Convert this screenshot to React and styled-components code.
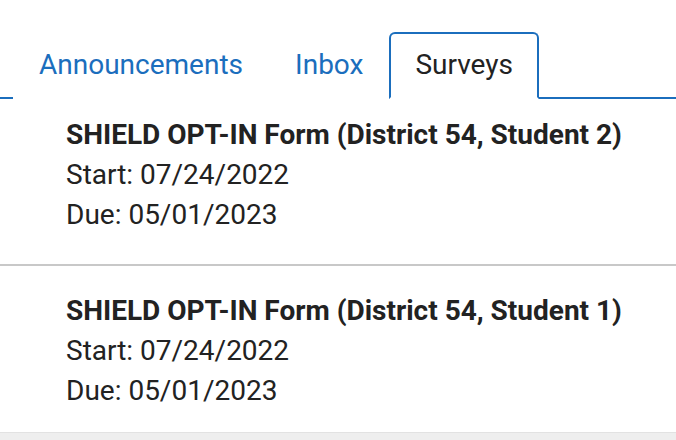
import React, { useState } from "react";
import styled, { createGlobalStyle } from "styled-components";

const GlobalStyle = createGlobalStyle`
  html, body {
    margin: 0;
    padding: 0;
    background: #ffffff;
  }
  body {
    font-family: Roboto, "Liberation Sans", Arial, sans-serif;
    color: #222222;
  }
`;

const surveys = [
  {
    id: 2,
    title: "SHIELD OPT-IN Form (District 54, Student 2)",
    start: "07/24/2022",
    due: "05/01/2023",
  },
  {
    id: 1,
    title: "SHIELD OPT-IN Form (District 54, Student 1)",
    start: "07/24/2022",
    due: "05/01/2023",
  },
];

const tabs = ["Announcements", "Inbox", "Surveys"];

export default function App() {
  const [active, setActive] = useState("Surveys");

  return (
    <>
      <GlobalStyle />
      <Page>
        <TabList>
          {tabs.map((tab) => (
            <Tab
              key={tab}
              $active={tab === active}
              onClick={() => setActive(tab)}
            >
              {tab}
            </Tab>
          ))}
        </TabList>
        <SurveyList>
          {surveys.map((survey, index) => (
            <React.Fragment key={survey.id}>
              {index > 0 && <Divider />}
              <SurveyItem>
                <Title>{survey.title}</Title>
                <Line>Start: {survey.start}</Line>
                <Line>Due: {survey.due}</Line>
              </SurveyItem>
            </React.Fragment>
          ))}
        </SurveyList>
        <Footer />
      </Page>
    </>
  );
}

const Page = styled.div`
  display: flex;
  flex-direction: column;
  min-height: 440px;
  padding-top: 32px;
  box-sizing: border-box;
`;

const TabList = styled.div`
  display: flex;
  align-items: flex-end;
  padding-left: 13px;
  border-bottom: 2px solid #1b6ebd;
`;

const Tab = styled.button`
  font-family: inherit;
  font-size: 28px;
  line-height: 32px;
  padding: 15px 24px 16px;
  margin-bottom: -2px;
  background: #ffffff;
  border: 2px solid ${(p) => (p.$active ? "#1b6ebd" : "transparent")};
  border-bottom-color: ${(p) => (p.$active ? "#ffffff" : "transparent")};
  border-radius: 6px 6px 0 0;
  color: ${(p) => (p.$active ? "#222222" : "#1b6ebd")};
  cursor: pointer;
`;

const SurveyList = styled.div`
  display: flex;
  flex-direction: column;
  flex: 1;
`;

const SurveyItem = styled.div`
  padding: 16px 20px 17px 66px;
  display: flex;
  flex-direction: column;
`;

const Title = styled.div`
  font-size: 28px;
  line-height: 40px;
  font-weight: 700;
`;

const Line = styled.div`
  font-size: 28px;
  line-height: 40px;
`;

const Divider = styled.hr`
  margin: 12px 0 9px;
  border: none;
  height: 2px;
  background: #c8c8c8;
`;

const Footer = styled.div`
  height: 7px;
  background: #eeeeee;
  border-top: 1px solid #e2e2e2;
`;
